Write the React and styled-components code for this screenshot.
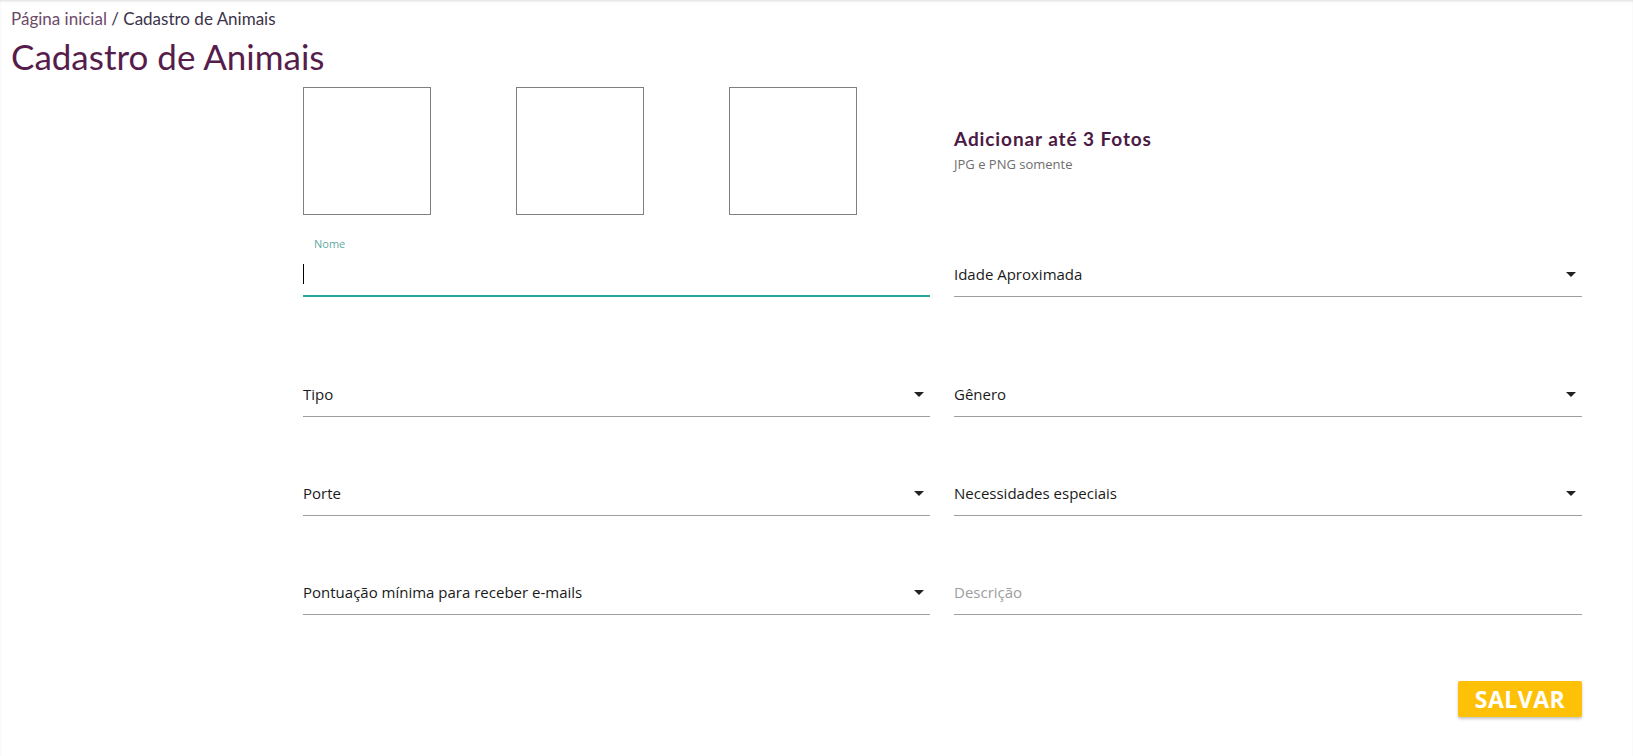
import styled, { createGlobalStyle } from "styled-components";

const GlobalStyle = createGlobalStyle`
  html, body {
    margin: 0;
    padding: 0;
    background: #ffffff;
  }
  body {
    font-family: "Open Sans", "Noto Sans", sans-serif;
  }
`;

const Page = styled.div`
  min-height: 756px;
  box-shadow: inset 0 2px 3px -1px rgba(0, 0, 0, 0.14);
  padding: 9px 12px 0 11px;
  box-sizing: border-box;
`;

const Breadcrumb = styled.div`
  font-family: "Lato", sans-serif;
  font-size: 17px;
  line-height: 20px;
  color: #3b3349;
`;

const Crumb = styled.span`
  color: #6c4a68;
`;

const Title = styled.h1`
  margin: 6px 0 0;
  font-family: "Lato", sans-serif;
  font-weight: 400;
  font-size: 35px;
  line-height: 42px;
  color: #561d4c;
`;

const Form = styled.form`
  margin: 10px 0 0 292px;
  width: 1279px;
`;

const PhotoRow = styled.div`
  display: flex;
  align-items: center;
`;

const Photos = styled.div`
  display: flex;
  gap: 85px;
  width: 651px;
`;

const PhotoBox = styled.div`
  width: 126px;
  height: 126px;
  border: 1px solid #808080;
`;

const PhotoInfo = styled.div`
  display: flex;
  flex-direction: column;
  gap: 5px;
  padding-bottom: 2px;
`;

const PhotoTitle = styled.span`
  font-family: "Lato", sans-serif;
  font-weight: 700;
  font-size: 19px;
  letter-spacing: 0.9px;
  color: #4a1a43;
`;

const PhotoHint = styled.span`
  font-size: 13px;
  color: #6e6e6e;
`;

const Grid = styled.div`
  display: grid;
  grid-template-columns: 627px 628px;
  column-gap: 24px;
  row-gap: 54px;
  margin-top: 22px;
  align-items: end;
`;

const Cell = styled.div`
  padding-bottom: ${(p) => (p.$spaced ? "21px" : "0")};
`;

const Label = styled.label`
  display: block;
  padding-left: 11px;
  font-size: 11px;
  line-height: 14px;
  color: #5fa9a3;
`;

const Field = styled.div`
  height: 44px;
  display: flex;
  align-items: center;
  justify-content: space-between;
  border-bottom: ${(p) => (p.$focused ? "2px solid #26a69a" : "1px solid #9e9e9e")};
  font-size: 15px;
  color: ${(p) => (p.$placeholder ? "#9e9e9e" : "#1a1a1a")};
`;

const Caret = styled.span`
  width: 1px;
  height: 20px;
  background: #000;
  margin-top: 2px;
`;

const Arrow = styled.span`
  width: 0;
  height: 0;
  margin-right: 6px;
  border-left: 5px solid transparent;
  border-right: 5px solid transparent;
  border-top: 5px solid #222;
`;

const Actions = styled.div`
  display: flex;
  justify-content: flex-end;
  margin-top: 66px;
`;

const SaveButton = styled.button`
  width: 124px;
  height: 36px;
  border: none;
  border-radius: 2px;
  background: #ffc107;
  color: #ffffff;
  font-family: "Open Sans", sans-serif;
  font-weight: 700;
  font-size: 23px;
  letter-spacing: 0.5px;
  box-shadow: 0 2px 3px rgba(0, 0, 0, 0.22);
  cursor: pointer;
`;

function Select({ label }) {
  return (
    <Field>
      <span>{label}</span>
      <Arrow />
    </Field>
  );
}

export default function App() {
  return (
    <Page>
      <GlobalStyle />
      <Breadcrumb>
        <Crumb>Página inicial</Crumb> / Cadastro de Animais
      </Breadcrumb>
      <Title>Cadastro de Animais</Title>
      <Form onSubmit={(e) => e.preventDefault()}>
        <PhotoRow>
          <Photos>
            <PhotoBox />
            <PhotoBox />
            <PhotoBox />
          </Photos>
          <PhotoInfo>
            <PhotoTitle>Adicionar até 3 Fotos</PhotoTitle>
            <PhotoHint>JPG e PNG somente</PhotoHint>
          </PhotoInfo>
        </PhotoRow>

        <Grid>
          <Cell $spaced>
            <Label>Nome</Label>
            <Field $focused>
              <Caret />
            </Field>
          </Cell>
          <Cell $spaced>
            <Select label="Idade Aproximada" />
          </Cell>
          <Cell>
            <Select label="Tipo" />
          </Cell>
          <Cell>
            <Select label="Gênero" />
          </Cell>
          <Cell>
            <Select label="Porte" />
          </Cell>
          <Cell>
            <Select label="Necessidades especiais" />
          </Cell>
          <Cell>
            <Select label="Pontuação mínima para receber e-mails" />
          </Cell>
          <Cell>
            <Field $placeholder>Descrição</Field>
          </Cell>
        </Grid>

        <Actions>
          <SaveButton type="submit">SALVAR</SaveButton>
        </Actions>
      </Form>
    </Page>
  );
}
